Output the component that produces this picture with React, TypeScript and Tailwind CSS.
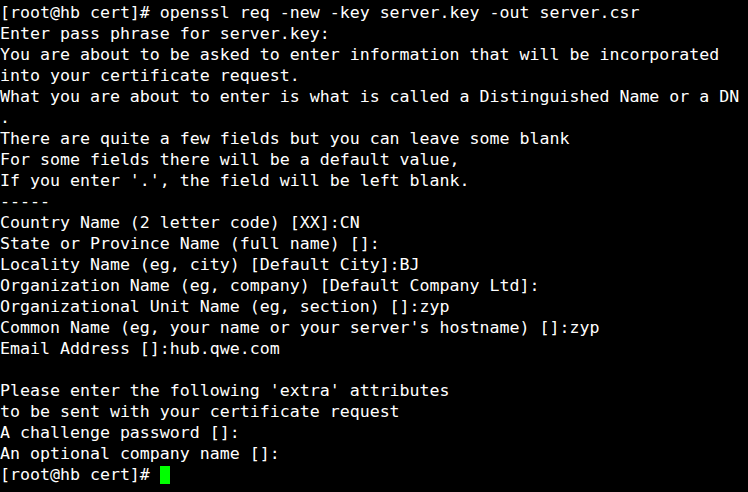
const lines = [
  "Verifying - Enter pass phrase for server.key:",
  "[root@hb cert]# openssl req -new -key server.key -out server.csr",
  "Enter pass phrase for server.key:",
  "You are about to be asked to enter information that will be incorporated",
  "into your certificate request.",
  "What you are about to enter is what is called a Distinguished Name or a DN",
  ".",
  "There are quite a few fields but you can leave some blank",
  "For some fields there will be a default value,",
  "If you enter '.', the field will be left blank.",
  "-----",
  "Country Name (2 letter code) [XX]:CN",
  "State or Province Name (full name) []:",
  "Locality Name (eg, city) [Default City]:BJ",
  "Organization Name (eg, company) [Default Company Ltd]:",
  "Organizational Unit Name (eg, section) []:zyp",
  "Common Name (eg, your name or your server's hostname) []:zyp",
  "Email Address []:hub.qwe.com",
  "",
  "Please enter the following 'extra' attributes",
  "to be sent with your certificate request",
  "A challenge password []:",
  "An optional company name []:",
];

export default function App() {
  return (
    <div className="w-[748px] h-[492px] bg-black overflow-hidden">
      <pre
        className="mt-[-19px] text-white text-[16.6px] leading-[21px] whitespace-pre"
        style={{ fontFamily: '"DejaVu Sans Mono", "Liberation Mono", monospace' }}
      >
        {lines.map((l, i) => (
          <div key={i} className="h-[21px]">
            {l}
          </div>
        ))}
        <div className="h-[21px]">
          {"[root@hb cert]# "}
          <span className="inline-block w-[10px] h-[18px] bg-[#00ff00] align-[-4px]" />
        </div>
      </pre>
    </div>
  );
}
